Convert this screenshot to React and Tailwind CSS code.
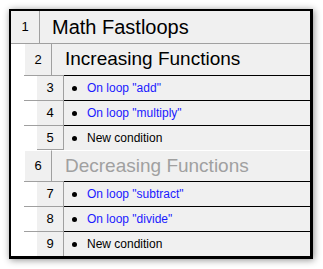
import React from 'react';

const font = { fontFamily: '"Liberation Sans", Arial, sans-serif' };

function Leaf({ n, text, loop, last }) {
  return (
    <div className="flex h-[25px]">
      <div className="w-[13px] bg-white" />
      <div className="w-[13px] bg-white border-t border-[#a0a0a0]" />
      <div
        className={`w-[27px] flex items-center justify-center bg-[#f0f0f0] border-t border-r border-[#a0a0a0] text-[13px] text-black ${
          last ? 'border-b' : ''
        }`}
      >
        {n}
      </div>
      <div className="flex-1 flex items-center bg-[#f0f0f0] border-t border-black pl-[8px]">
        <span className="w-[5px] h-[5px] rounded-full bg-black" />
        <span className={`ml-[10px] text-[12px] ${loop ? 'text-[#1a1aff]' : 'text-black'}`}>{text}</span>
      </div>
    </div>
  );
}

function Group({ n, title, dim, topLine }) {
  return (
    <div className="flex h-[31px]">
      <div className="w-[14px] bg-white" />
      <div
        className={`w-[27px] flex items-center justify-center bg-[#f0f0f0] border-r border-[#a0a0a0] text-[13px] text-black ${
          topLine ? 'border-t border-t-white' : ''
        }`}
      >
        {n}
      </div>
      <div
        className={`flex-1 flex items-center bg-[#f0f0f0] pl-[13px] text-[19px] ${
          dim ? 'text-[#a0a0a0]' : 'text-black'
        } ${topLine ? 'border-t border-white' : ''}`}
      >
        {title}
      </div>
    </div>
  );
}

export default function App() {
  return (
    <div className="w-[323px] h-[269px] bg-white pt-[9px] pl-[9px]" style={font}>
      <div className="w-[304px] bg-white border-l-2 border-t-2 border-r-[3px] border-b-[3px] border-black shadow-[1px_1px_7px_rgba(0,0,0,0.45)]">
        <div className="flex h-[33px] border-b border-[#a0a0a0]">
          <div className="w-[29px] flex items-center justify-center bg-[#f0f0f0] border-r border-[#a0a0a0] text-[13px] text-black">
            1
          </div>
          <div className="flex-1 flex items-center bg-[#f0f0f0] pl-[12px] text-[20px] text-black">
            Math Fastloops
          </div>
        </div>
        <Group n={2} title="Increasing Functions" />
        <Leaf n={3} text={'On loop "add"'} loop />
        <Leaf n={4} text={'On loop "multiply"'} loop />
        <Leaf n={5} text="New condition" last />
        <Group n={6} title="Decreasing Functions" dim topLine />
        <Leaf n={7} text={'On loop "subtract"'} loop />
        <Leaf n={8} text={'On loop "divide"'} loop />
        <Leaf n={9} text="New condition" />
      </div>
    </div>
  );
}
